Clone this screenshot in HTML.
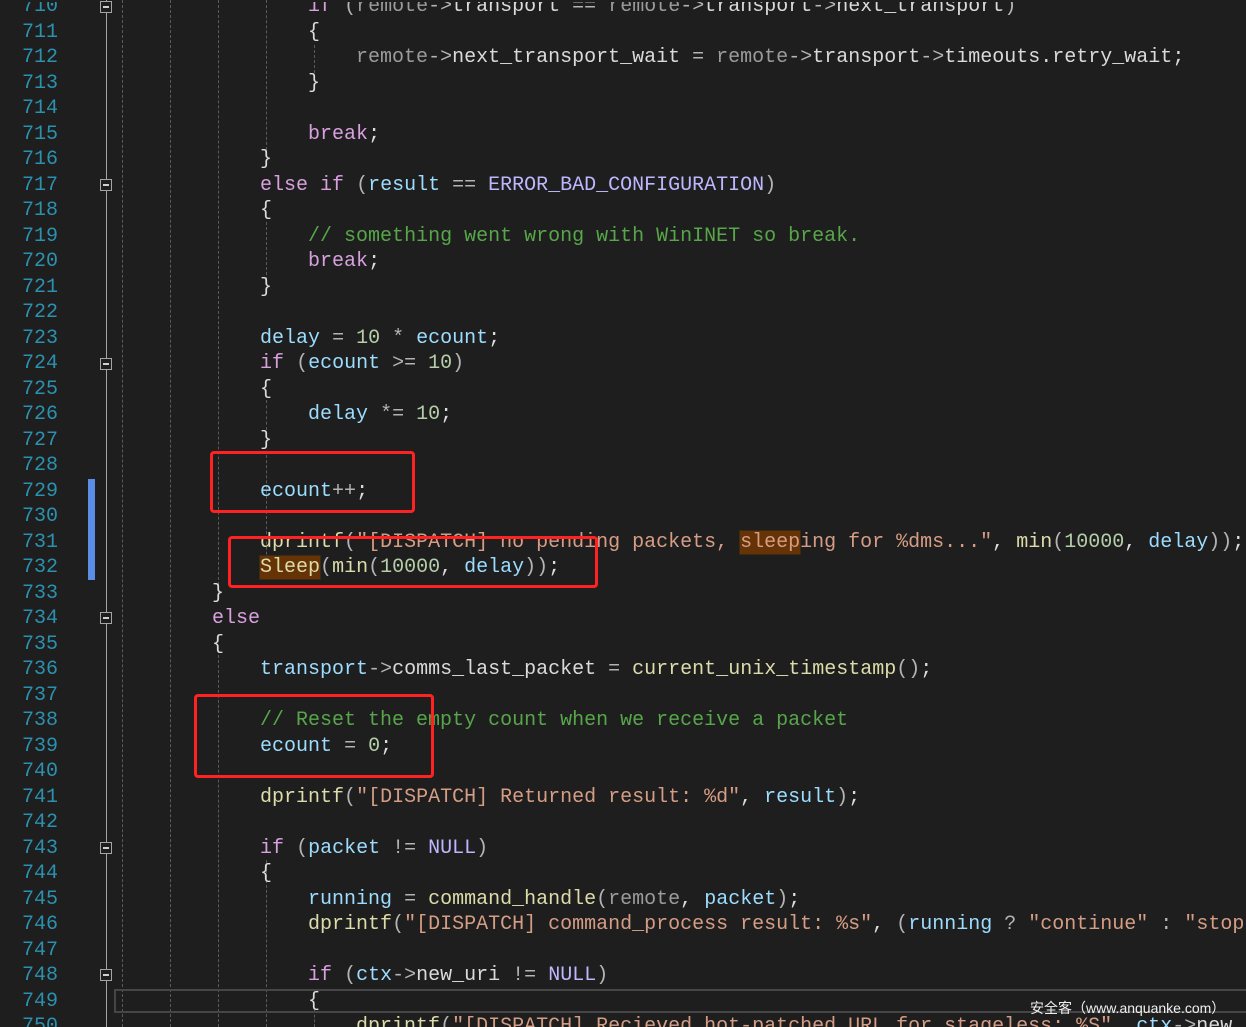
<!DOCTYPE html>
<html><head><meta charset="utf-8"><style>
html,body{margin:0;padding:0;background:#1e1e1e;width:1246px;height:1027px;overflow:hidden;position:relative;font-family:"Liberation Mono",monospace;}
#wrap{position:absolute;left:0;top:2px;width:1246px;height:1025px;overflow:hidden}
.ln{position:absolute;left:0;width:58px;text-align:right;color:#2b91af;font-size:20px;line-height:25.5px;}
.cd{position:absolute;left:68px;white-space:pre;color:#dcdcdc;font-size:20px;line-height:25.5px;}
.k{color:#d8a0df}.v{color:#9cdcfe}.f{color:#dcdcaa}.s{color:#d69d85}.c{color:#57a64a}.n{color:#b5cea8}.m{color:#beb7ff}.g{color:#9b9b9b}.o{color:#b4b4b4}.w{color:#dadada}
.hl{background:#653306;outline:1px solid #3a2a10}
.guide{position:absolute;top:0;height:1027px;width:0;border-left:1px dashed #5a5a5a}
.fold{position:absolute;left:100px;width:10px;height:10px;border:1px solid #a5a5a5;background:#1e1e1e}
.fold:after{content:"";position:absolute;left:2px;top:4px;width:6px;height:2px;background:#d0d0d0}
.red{position:absolute;border:3px solid #ff2222;border-radius:4px;box-sizing:border-box}
</style></head><body>
<div style="position:absolute;left:106px;top:0;width:1px;height:1027px;background:#a5a5a5"></div>
<div class="guide" style="left:122px"></div>
<div class="guide" style="left:170px"></div>
<div class="guide" style="left:218px;top:0;height:595px"></div>
<div class="guide" style="left:218px;top:650px;height:377px"></div>
<div class="guide" style="left:266px;top:0;height:150px"></div>
<div class="guide" style="left:266px;top:222px;height:58px"></div>
<div class="guide" style="left:266px;top:400px;height:30px"></div>
<div class="guide" style="left:266px;top:455px;height:120px"></div>
<div class="guide" style="left:314px;top:45px;height:28px"></div>
<div class="guide" style="left:266px;top:860px;height:167px"></div>
<div class="guide" style="left:314px;top:1010px;height:17px"></div>
<div style="position:absolute;left:88px;top:479px;width:7px;height:101px;background:#5a8ee6"></div>
<div class="fold" style="top:1px"></div>
<div class="fold" style="top:179px"></div>
<div class="fold" style="top:358px"></div>
<div class="fold" style="top:612px"></div>
<div class="fold" style="top:842px"></div>
<div class="fold" style="top:969px"></div>
<div style="position:absolute;left:114px;top:989px;width:1140px;height:24px;box-sizing:border-box;border:2px solid #464646"></div>
<div id="wrap">
<div class="ln" style="top:-8px">710</div><div class="cd" style="top:-8px">                    <span class="k">if</span> <span class="o">(</span><span class="g">remote</span><span class="o">-&gt;</span><span class="w">transport</span> <span class="o">==</span> <span class="g">remote</span><span class="o">-&gt;</span><span class="w">transport</span><span class="o">-&gt;</span><span class="w">next_transport</span><span class="o">)</span></div>
<div class="ln" style="top:17.5px">711</div><div class="cd" style="top:17.5px">                    {</div>
<div class="ln" style="top:43px">712</div><div class="cd" style="top:43px">                        <span class="g">remote</span><span class="o">-&gt;</span><span class="w">next_transport_wait</span> <span class="o">=</span> <span class="g">remote</span><span class="o">-&gt;</span><span class="w">transport</span><span class="o">-&gt;</span><span class="w">timeouts</span>.<span class="w">retry_wait</span>;</div>
<div class="ln" style="top:68.5px">713</div><div class="cd" style="top:68.5px">                    }</div>
<div class="ln" style="top:94px">714</div>
<div class="ln" style="top:119.5px">715</div><div class="cd" style="top:119.5px">                    <span class="k">break</span>;</div>
<div class="ln" style="top:145px">716</div><div class="cd" style="top:145px">                }</div>
<div class="ln" style="top:170.5px">717</div><div class="cd" style="top:170.5px">                <span class="k">else if</span> <span class="o">(</span><span class="v">result</span> <span class="o">==</span> <span class="m">ERROR_BAD_CONFIGURATION</span><span class="o">)</span></div>
<div class="ln" style="top:196px">718</div><div class="cd" style="top:196px">                {</div>
<div class="ln" style="top:221.5px">719</div><div class="cd" style="top:221.5px">                    <span class="c">// something went wrong with WinINET so break.</span></div>
<div class="ln" style="top:247px">720</div><div class="cd" style="top:247px">                    <span class="k">break</span>;</div>
<div class="ln" style="top:272.5px">721</div><div class="cd" style="top:272.5px">                }</div>
<div class="ln" style="top:298px">722</div>
<div class="ln" style="top:323.5px">723</div><div class="cd" style="top:323.5px">                <span class="v">delay</span> <span class="o">=</span> <span class="n">10</span> <span class="o">*</span> <span class="v">ecount</span>;</div>
<div class="ln" style="top:349px">724</div><div class="cd" style="top:349px">                <span class="k">if</span> <span class="o">(</span><span class="v">ecount</span> <span class="o">&gt;=</span> <span class="n">10</span><span class="o">)</span></div>
<div class="ln" style="top:374.5px">725</div><div class="cd" style="top:374.5px">                {</div>
<div class="ln" style="top:400px">726</div><div class="cd" style="top:400px">                    <span class="v">delay</span> <span class="o">*=</span> <span class="n">10</span>;</div>
<div class="ln" style="top:425.5px">727</div><div class="cd" style="top:425.5px">                }</div>
<div class="ln" style="top:451px">728</div>
<div class="ln" style="top:476.5px">729</div><div class="cd" style="top:476.5px">                <span class="v">ecount</span><span class="o">++</span>;</div>
<div class="ln" style="top:502px">730</div>
<div class="ln" style="top:527.5px">731</div><div class="cd" style="top:527.5px">                <span class="f">dprintf</span><span class="o">(</span><span class="s">"[DISPATCH] no pending packets, <span class="hl">sleep</span>ing for %dms..."</span>, <span class="f">min</span><span class="o">(</span><span class="n">10000</span>, <span class="v">delay</span><span class="o">))</span>;</div>
<div class="ln" style="top:553px">732</div><div class="cd" style="top:553px">                <span class="f hl">Sleep</span><span class="o">(</span><span class="f">min</span><span class="o">(</span><span class="n">10000</span>, <span class="v">delay</span><span class="o">))</span>;</div>
<div class="ln" style="top:578.5px">733</div><div class="cd" style="top:578.5px">            }</div>
<div class="ln" style="top:604px">734</div><div class="cd" style="top:604px">            <span class="k">else</span></div>
<div class="ln" style="top:629.5px">735</div><div class="cd" style="top:629.5px">            {</div>
<div class="ln" style="top:655px">736</div><div class="cd" style="top:655px">                <span class="v">transport</span><span class="o">-&gt;</span><span class="w">comms_last_packet</span> <span class="o">=</span> <span class="f">current_unix_timestamp</span><span class="o">()</span>;</div>
<div class="ln" style="top:680.5px">737</div>
<div class="ln" style="top:706px">738</div><div class="cd" style="top:706px">                <span class="c">// Reset the empty count when we receive a packet</span></div>
<div class="ln" style="top:731.5px">739</div><div class="cd" style="top:731.5px">                <span class="v">ecount</span> <span class="o">=</span> <span class="n">0</span>;</div>
<div class="ln" style="top:757px">740</div>
<div class="ln" style="top:782.5px">741</div><div class="cd" style="top:782.5px">                <span class="f">dprintf</span><span class="o">(</span><span class="s">"[DISPATCH] Returned result: %d"</span>, <span class="v">result</span><span class="o">)</span>;</div>
<div class="ln" style="top:808px">742</div>
<div class="ln" style="top:833.5px">743</div><div class="cd" style="top:833.5px">                <span class="k">if</span> <span class="o">(</span><span class="v">packet</span> <span class="o">!=</span> <span class="m">NULL</span><span class="o">)</span></div>
<div class="ln" style="top:859px">744</div><div class="cd" style="top:859px">                {</div>
<div class="ln" style="top:884.5px">745</div><div class="cd" style="top:884.5px">                    <span class="v">running</span> <span class="o">=</span> <span class="f">command_handle</span><span class="o">(</span><span class="g">remote</span>, <span class="v">packet</span><span class="o">)</span>;</div>
<div class="ln" style="top:910px">746</div><div class="cd" style="top:910px">                    <span class="f">dprintf</span><span class="o">(</span><span class="s">"[DISPATCH] command_process result: %s"</span>, <span class="o">(</span><span class="v">running</span> <span class="o">?</span> <span class="s">"continue"</span> <span class="o">:</span> <span class="s">"stop"</span><span class="o">))</span>;</div>
<div class="ln" style="top:935.5px">747</div>
<div class="ln" style="top:961px">748</div><div class="cd" style="top:961px">                    <span class="k">if</span> <span class="o">(</span><span class="v">ctx</span><span class="o">-&gt;</span><span class="w">new_uri</span> <span class="o">!=</span> <span class="m">NULL</span><span class="o">)</span></div>
<div class="ln" style="top:986.5px">749</div><div class="cd" style="top:986.5px">                    {</div>
<div class="ln" style="top:1012px">750</div><div class="cd" style="top:1012px">                        <span class="f">dprintf</span><span class="o">(</span><span class="s">"[DISPATCH] Recieved hot-patched URL for stageless: %S"</span>, <span class="v">ctx</span><span class="o">-&gt;</span><span class="w">new_uri</span><span class="o">)</span>;</div>
</div>
<div class="red" style="left:210px;top:451px;width:205px;height:62px"></div>
<div class="red" style="left:228px;top:536px;width:370px;height:52px"></div>
<div class="red" style="left:194px;top:694px;width:240px;height:84px"></div>
<div style="position:absolute;left:1030px;top:998px;font-family:'Liberation Sans','Noto Sans CJK SC',sans-serif;font-size:14px;color:#f0f0f0;white-space:nowrap;">安全客（www.anquanke.com）</div>
</body></html>
